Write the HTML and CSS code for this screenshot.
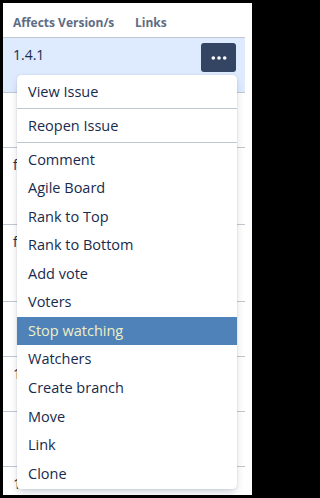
FILE: index.html
```html
<!DOCTYPE html>
<html>
<head>
<meta charset="utf-8">
<link rel="stylesheet" href="styles.css">
</head>
<body>
<div class="screen">
  <div class="table">
    <div class="row head">
      <div class="cell">Affects Version/s</div>
      <div class="cell">Links</div>
    </div>
    <div class="row sel">
      <div class="cell">1.4.1</div>
      <div class="cell actions">
        <button class="more" type="button" aria-label="More actions">
          <svg width="16" height="4" viewBox="0 0 16 4"><circle cx="2.3" cy="2" r="1.8" fill="#fff"/><circle cx="8" cy="2" r="1.8" fill="#fff"/><circle cx="13.7" cy="2" r="1.8" fill="#fff"/></svg>
        </button>
      </div>
    </div>
    <div class="row"><div class="cell"></div><div class="cell"></div></div>
    <div class="row tall"><div class="cell">f</div><div class="cell"></div></div>
    <div class="row tall"><div class="cell">f</div><div class="cell"></div></div>
    <div class="row"><div class="cell"></div><div class="cell"></div></div>
    <div class="row"><div class="cell">1</div><div class="cell"></div></div>
    <div class="row"><div class="cell"></div><div class="cell"></div></div>
    <div class="row"><div class="cell">1</div><div class="cell"></div></div>
  </div>
  <div class="menu">
    <div class="section">
      <div class="item">View Issue</div>
    </div>
    <div class="section">
      <div class="item">Reopen Issue</div>
    </div>
    <div class="section last">
      <div class="item">Comment</div>
      <div class="item">Agile Board</div>
      <div class="item">Rank to Top</div>
      <div class="item">Rank to Bottom</div>
      <div class="item">Add vote</div>
      <div class="item">Voters</div>
      <div class="item active">Stop watching</div>
      <div class="item">Watchers</div>
      <div class="item">Create branch</div>
      <div class="item">Move</div>
      <div class="item">Link</div>
      <div class="item">Clone</div>
    </div>
  </div>
</div>
</body>
</html>
```
FILE: styles.css
```css
html, body {
  background: #000;
}
body {
  margin: 0;
  padding: 3px 4px 3px 3px;
}
.screen {
  width: 249px;
  height: 492px;
  background: #fff;
  position: relative;
  overflow: hidden;
  font-family: "Open Sans", "Noto Sans", sans-serif;
  color: #172b4d;
}
.table {
  width: 242px;
}
.row {
  display: grid;
  grid-template-columns: 122px 120px;
  height: 54px;
  border-bottom: 1px solid #c1c7d0;
  box-sizing: content-box;
}
.row .cell {
  padding: 6.5px 10px 0;
  font-size: 14px;
  line-height: 20px;
  white-space: nowrap;
  overflow: hidden;
}
.row.head {
  height: 34px;
}
.row.head .cell {
  font-size: 12px;
  font-weight: 700;
  line-height: 16px;
  color: #5e6c84;
  padding: 11.5px 0 0 10px;
}
.row.sel {
  background: #deebff;
}
.row.tall {
  height: 76px;
}
.row .cell.actions {
  display: flex;
  justify-content: flex-end;
  align-items: flex-start;
  padding: 5px 9px 0 0;
}
.more {
  width: 35px;
  height: 29px;
  border: none;
  border-radius: 3px;
  background: #344563;
  display: flex;
  align-items: center;
  justify-content: center;
  padding: 0;
}
.more svg {
  display: block;
}
.menu {
  position: absolute;
  left: 14px;
  top: 72.3px;
  width: 220px;
  background: #fff;
  border-radius: 4px;
  box-shadow: 0 4px 8px -2px rgba(9, 30, 66, 0.25), 0 0 1px rgba(9, 30, 66, 0.31);
  font-size: 14.5px;
  color: #172b4d;
}
.section {
  padding: 2.25px 0;
}
.section.last {
  padding-bottom: 1px;
}
.section + .section {
  border-top: 1px solid #c1c7d0;
}
.item {
  padding-left: 11px;
  height: 28.55px;
  line-height: 28.55px;
  white-space: nowrap;
}
.item.active {
  background: #4f82b8;
  color: #eef0c4;
}
```
